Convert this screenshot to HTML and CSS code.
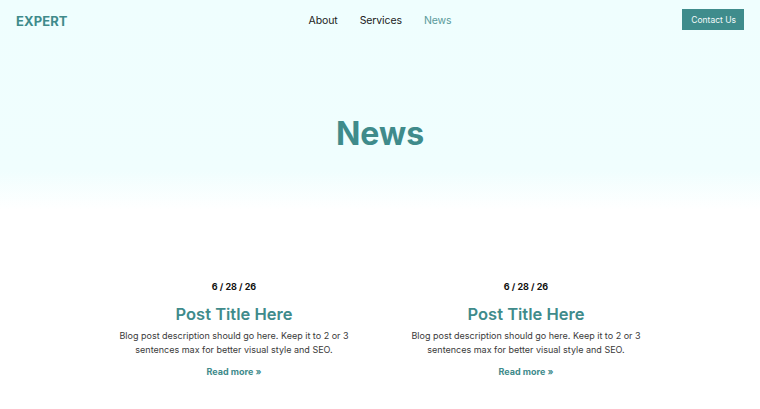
FILE: index.html
```html
<!DOCTYPE html>
<html>
<head>
<meta charset="utf-8">
<link rel="stylesheet" href="styles.css">
</head>
<body>
<div class="page">
  <header class="topbar">
    <div class="logo">EXPERT</div>
    <nav class="nav">
      <a class="nav-link">About</a>
      <a class="nav-link">Services</a>
      <a class="nav-link active">News</a>
    </nav>
    <a class="contact-btn">Contact Us</a>
  </header>
  <section class="hero">
    <h1 class="hero-title">News</h1>
  </section>
  <section class="posts">
    <article class="post">
      <div class="post-date">6 / 28 / 26</div>
      <h2 class="post-title">Post Title Here</h2>
      <p class="post-desc">Blog post description should go here. Keep it to 2 or 3 sentences max for better visual style and SEO.</p>
      <a class="read-more">Read more »</a>
    </article>
    <article class="post">
      <div class="post-date">6 / 28 / 26</div>
      <h2 class="post-title">Post Title Here</h2>
      <p class="post-desc">Blog post description should go here. Keep it to 2 or 3 sentences max for better visual style and SEO.</p>
      <a class="read-more">Read more »</a>
    </article>
  </section>
</div>
</body>
</html>
```
FILE: styles.css
```css
* { box-sizing: border-box; }
html, body { margin: 0; padding: 0; }
body {
  font-family: Inter, "Noto Sans", sans-serif;
  color: #222;
  background: #fff;
}
.page {
  width: 760px;
  min-height: 409px;
  background: linear-gradient(to bottom, #effefe 0px, #f0fefe 170px, #ffffff 210px);
}
.topbar {
  height: 40px;
  display: grid;
  grid-template-columns: 1fr auto 1fr;
  align-items: center;
  padding: 0 16px;
}
.logo {
  font-weight: 700;
  font-size: 13px;
  color: #3f8b8b;
  letter-spacing: 0.1px;
  justify-self: start;
  margin-top: 1px;
}
.nav {
  display: flex;
  gap: 22px;
  font-size: 10.5px;
  letter-spacing: -0.1px;
}
.nav-link { color: #222; }
.nav-link.active { color: #5a9a9a; }
.contact-btn {
  justify-self: end;
  background: #3f8c8c;
  color: #f4fbfb;
  font-size: 8.5px;
  padding: 0 8px 0 9px;
  height: 21px;
  display: flex;
  align-items: center;
  margin-top: -1px;
}
.hero {
  height: 220px;
  display: flex;
  justify-content: center;
  padding-top: 73px;
}
.hero-title {
  margin: 0;
  font-size: 32px;
  font-weight: 700;
  color: #3f8b8b;
  line-height: 42px;
}
.posts {
  display: grid;
  grid-template-columns: 240px 240px;
  column-gap: 52px;
  justify-content: center;
  padding-top: 21px;
}
.post {
  text-align: center;
  display: flex;
  flex-direction: column;
  align-items: center;
}
.post-date {
  font-size: 9px;
  font-weight: 700;
  color: #111;
  line-height: 12px;
}
.post-title {
  margin: 10px 0 0;
  font-size: 16.5px;
  font-weight: 600;
  color: #3f8b8b;
  line-height: 22px;
}
.post-desc {
  margin: 4px 0 0;
  font-size: 9px;
  line-height: 14px;
  color: #3a3a3a;
}
.read-more {
  margin-top: 9px;
  font-size: 9px;
  font-weight: 700;
  color: #3f8b8b;
  line-height: 12px;
}
```
